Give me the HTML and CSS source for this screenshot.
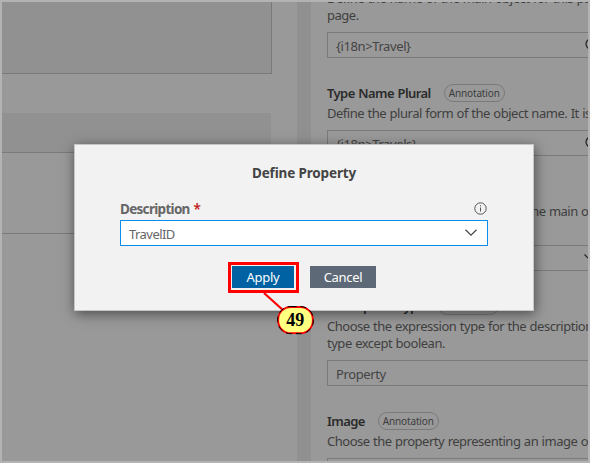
FILE: index.html
```
<!DOCTYPE html>
<html lang="en">
<head>
<meta charset="utf-8">
<title>Define Property</title>
<link rel="stylesheet" href="styles.css">
</head>
<body>
<div class="app">
  <main class="canvas">
    <div class="block block-top"></div>
    <div class="block block-head"></div>
    <div class="block-row"></div>
  </main>
  <div class="divider"></div>
  <aside class="panel">
    <section class="prop">
      <p>Define the name of the main object for this page.<br>page.</p>
      <div class="field"><span>{i18n&gt;Travel}</span><svg class="globe" viewBox="0 0 12 12"><circle cx="6" cy="6" r="5"/></svg></div>
    </section>
    <section class="prop">
      <header><h3>Type Name Plural</h3><span class="chip">Annotation</span></header>
      <p>Define the plural form of the object name. It is</p>
      <div class="field"><span>{i18n&gt;Travels}</span><svg class="globe" viewBox="0 0 12 12"><circle cx="6" cy="6" r="5"/></svg></div>
    </section>
    <section class="prop">
      <header><h3>Title</h3><span class="chip">Annotation</span></header>
      <p class="tight">Choose the property for the title of the main object<br>page.</p>
      <div class="field"><svg class="arrow" viewBox="0 0 12 7"><path d="M.5.5 6 6l5.500-5.500"/></svg></div>
    </section>
    <section class="prop">
      <header><h3>Description Type</h3><span class="chip">Annotation</span></header>
      <p>Choose the expression type for the description<br>type except boolean.</p>
      <div class="field"><span>Property</span></div>
    </section>
    <section class="prop">
      <header><h3>Image</h3><span class="chip">Annotation</span></header>
      <p>Choose the property representing an image or</p>
      <div class="field"></div>
    </section>
  </aside>
</div>
<div class="dialog" role="dialog">
  <h2>Define Property</h2>
  <div class="label-row">
    <label>Description <b>*</b></label>
    <svg class="info" viewBox="0 0 13 13"><circle cx="6.500" cy="6.500" r="5.700"/><path d="M6.500 5.500v4M6.500 3.200v1.200"/></svg>
  </div>
  <div class="select"><span>TravelID</span><svg class="chevron" viewBox="0 0 12 7"><path d="M.5.7 6 6.100 11.500.7"/></svg></div>
  <div class="actions"><button class="apply">Apply</button><button class="cancel">Cancel</button></div>
</div>
<svg class="callout" viewBox="0 0 90 76">
  <path class="lead" d="M36 31 56 49"/>
  <rect class="mark" x="1.500" y="1.500" width="68" height="28"/>
  <rect class="pill" x="50.200" y="45" width="34.600" height="26.200" rx="12.500"/>
  <rect class="pill-dash" x="49.600" y="44.500" width="35.800" height="27.200" rx="13"/>
  <text x="67.300" y="64">49</text>
</svg>
</body>
</html>
```
FILE: styles.css
```
* { box-sizing: border-box; }
body {
  margin: 0;
  width: 590px;
  height: 463px;
  overflow: hidden;
  font-family: "Noto Sans", "Open Sans", sans-serif;
  font-size: 13px;
  letter-spacing: -.4px;
}
h2, h3, p { margin: 0; }
.app {
  display: flex;
  width: 590px;
  height: 463px;
  border: 2px solid #b3b3b3;
  background: #999;
  overflow: hidden;
}
.canvas { width: 295px; flex: none; }
.block { width: 269px; background: #919191; }
.block-top {
  width: 270px;
  height: 72px;
  border: solid #7a7a7a;
  border-width: 0 1px 1px 0;
}
.block-head { height: 40px; margin-top: 39px; border-bottom: 1px solid #7a7a7a; }
.block-row { width: 269px; height: 81px; border-bottom: 1px solid #7a7a7a; }
.divider { width: 14px; flex: none; background: #909090; }
.panel { width: 277px; flex: none; padding-left: 16px; margin-top: -12px; overflow: hidden; height: 471px; }
.prop { width: 300px; margin-bottom: 26px; }
.prop header { display: flex; align-items: center; height: 18px; gap: 13px; margin-bottom: 3px; }
.prop h3 { font-size: 13px; line-height: 18px; font-weight: 600; letter-spacing: -.58px; word-spacing: .8px; color: #2b2b2b; white-space: nowrap; }
.chip {
  width: 61px;
  height: 18px;
  border: 1px solid #7a7a7a;
  border-radius: 9px;
  text-align: center;
  font-size: 10px;
  line-height: 17px;
  letter-spacing: -.15px;
  color: #3d3d3d;
}
.prop p { margin-bottom: 8px; line-height: 17px; letter-spacing: -.48px; word-spacing: .5px; color: #3f3f3f; white-space: nowrap; }
.prop .tight { letter-spacing: -.52px; }
.field {
  display: flex;
  align-items: center;
  height: 26px;
  padding: 2px 0 0 8px;
  border: 1px solid #7a7a7a;
  line-height: 20px;
  color: #444;
}
.globe, .arrow { fill: none; stroke: #222; stroke-width: 1.200; margin-left: auto; flex: none; }
.globe { width: 12px; height: 12px; margin-right: 29px; margin-top: -4px; }
.arrow { width: 12px; height: 7px; margin-right: 30px; margin-top: -4px; }
.dialog {
  position: absolute;
  left: 74px;
  top: 144px;
  width: 460px;
  height: 167px;
  padding: 18px 45px 0;
  border: 1px solid #c6c6c6;
  background: #f2f2f2;
  box-shadow: 1px 3px 12px rgba(0,0,0,.5);
}
.dialog h2 { text-align: center; font-size: 13.500px; line-height: 20px; letter-spacing: -.15px; color: #444; }
.label-row { display: flex; align-items: center; justify-content: space-between; height: 20px; margin-top: 16px; padding-right: 1px; }
.label-row label { font-size: 13.500px; font-weight: 700; letter-spacing: -.7px; color: #666; }
.label-row b { margin-left: 1px; font-weight: 600; color: #c02020; }
.info { width: 13px; height: 13px; margin-top: -1px; fill: none; stroke: #555; }
.select {
  display: flex;
  align-items: center;
  justify-content: space-between;
  width: 368px;
  height: 26px;
  margin-top: 1px;
  padding: 2px 10px 0 8px;
  border: 1px solid #0a8ceb;
  background: #fff;
  color: #666;
  letter-spacing: -.55px;
}
.chevron { width: 12px; height: 7px; margin-top: -3px; fill: none; stroke: #444; stroke-width: 1.200; }
.actions { display: flex; gap: 16px; margin: 20px 0 0 112px; }
button { height: 22px; padding: 0; border: 0; font: 13px/22px "Noto Sans", sans-serif; letter-spacing: -.3px; color: #fff; }
.apply { width: 62px; background: #0062a3; }
.cancel { width: 66px; background: #5e6977; }
.callout { position: absolute; left: 228px; top: 262px; width: 90px; height: 76px; }
.mark { fill: none; stroke: #ff0000; stroke-width: 3; }
.lead { stroke: #ff0000; stroke-width: 2.200; }
.pill { fill: #ffff80; stroke: #ff0000; stroke-width: 1.800; }
.pill-dash { fill: none; stroke: #000; stroke-width: 1; stroke-dasharray: 6 4; }
.callout text { font: bold 18px "Liberation Serif", serif; letter-spacing: 0; text-anchor: middle; fill: #000; }
```
